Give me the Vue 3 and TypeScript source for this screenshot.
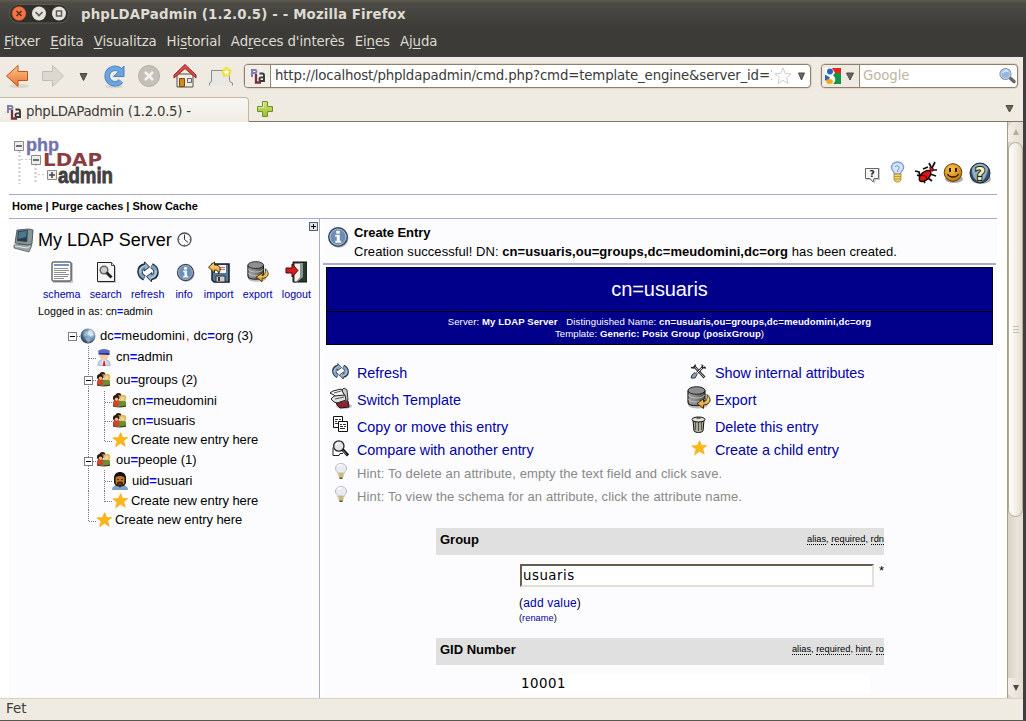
<script setup lang="ts">
interface TreeRow {
  height: number
  depth: number
  icon: string
  parts: string[]
  box?: boolean
  last?: boolean
}

const menus = [
  ['', 'F', 'itxer'],
  ['', 'E', 'dita'],
  ['', 'V', 'isualitza'],
  ['Hi', 's', 'torial'],
  ['Ad', 'r', "eces d'interès"],
  ['Ei', 'n', 'es'],
  ['Aj', 'u', 'da'],
]

const tools = ['schema', 'search', 'refresh', 'info', 'import', 'export', 'logout']

const tree: TreeRow[] = [
  { height: 21, depth: 0, icon: 'globe', parts: ['dc', 'meudomini'], box: true },
  { height: 22, depth: 1, icon: 'admin', parts: ['cn', 'admin'] },
  { height: 23, depth: 1, icon: 'group', parts: ['ou', 'groups (2)'], box: true },
  { height: 20, depth: 2, icon: 'group', parts: ['cn', 'meudomini'] },
  { height: 19, depth: 2, icon: 'group', parts: ['cn', 'usuaris'] },
  { height: 20, depth: 2, icon: 'star', parts: ['Create new entry here'], last: true },
  { height: 20, depth: 1, icon: 'group', parts: ['ou', 'people (1)'], box: true },
  { height: 21, depth: 2, icon: 'person', parts: ['uid', 'usuari'] },
  { height: 19, depth: 2, icon: 'star', parts: ['Create new entry here'], last: true },
  { height: 20, depth: 1, icon: 'star', parts: ['Create new entry here'], last: true },
]

const actions = [
  { icon: 'refresh', label: 'Refresh', h: 26, size: 17 },
  { icon: 'tools', label: 'Show internal attributes', h: 26, size: 17 },
  { icon: 'switch', label: 'Switch Template', h: 28, size: 23 },
  { icon: 'export', label: 'Export', h: 28, size: 24 },
  { icon: 'copy', label: 'Copy or move this entry', h: 25, size: 17 },
  { icon: 'trash', label: 'Delete this entry', h: 25, size: 17 },
  { icon: 'compare', label: 'Compare with another entry', h: 22, size: 17 },
  { icon: 'star', label: 'Create a child entry', h: 22, size: 16 },
]

const hints = [
  'Hint: To delete an attribute, empty the text field and click save.',
  'Hint: To view the schema for an attribute, click the attribute name.',
]
</script>

<template>
  <div class="window">
    <svg class="defs" width="0" height="0" aria-hidden="true">
      <defs>
        <linearGradient id="g-orange" x1="0" y1="0" x2="0" y2="1"><stop offset="0" stop-color="#f9c98c" /><stop offset="1" stop-color="#e9702c" /></linearGradient>
        <linearGradient id="g-grey" x1="0" y1="0" x2="1" y2="0"><stop offset="0" stop-color="#9a9a9a" /><stop offset=".4" stop-color="#8a8a8a" /><stop offset="1" stop-color="#4a4a4a" /></linearGradient>
        <linearGradient id="g-gold" x1="0" y1="0" x2="0" y2="1"><stop offset="0" stop-color="#fbe49a" /><stop offset="1" stop-color="#e0981c" /></linearGradient>
        <linearGradient id="g-green" x1="0" y1="0" x2="0" y2="1"><stop offset="0" stop-color="#d3e27c" /><stop offset="1" stop-color="#9dbf2c" /></linearGradient>
        <radialGradient id="g-globe" cx=".65" cy=".35" r=".75"><stop offset="0" stop-color="#c9dcea" /><stop offset=".5" stop-color="#6a8fb4" /><stop offset="1" stop-color="#1c2c44" /></radialGradient>
        <radialGradient id="g-smile" cx=".4" cy=".3" r=".7"><stop offset="0" stop-color="#f9c44e" /><stop offset="1" stop-color="#c47a08" /></radialGradient>
      </defs>
      <symbol id="i-schema" viewBox="0 0 22 22">
        <rect x="2" y="2" width="20" height="20" fill="#c9c9cc" />
        <rect x="1" y="1" width="19" height="19" rx="1" fill="#fff" stroke="#222" />
        <rect x="3" y="3" width="15" height="2" fill="#6f93bd" />
        <path d="M3 7.500h14M3 9.500h15M3 11.500h12M3 13.500h15M3 15.500h14M3 17.500h10" stroke="#8d8d8d" />
      </symbol>
      <symbol id="i-search" viewBox="0 0 22 22">
        <path d="M3 3h15l3 3v16H3z" fill="#c9c9cc" />
        <path d="M2.500 1.500h14l3 3v16h-17z" fill="#f4f4f2" stroke="#222" />
        <path d="M16.500 1.500v3h3" fill="#ddd" stroke="#444" />
        <circle cx="9" cy="9" r="3.800" fill="#c9d2cc" stroke="#666" stroke-width="1.500" />
        <path d="M11.500 11.500l5 5" stroke="#222" stroke-width="3" />
      </symbol>
      <symbol id="i-refresh" viewBox="0 0 22 22">
        <g id="arrow-half">
          <path d="M7.500 17C1.500 14 1 6.500 8 5" fill="none" stroke="#1e2c3c" stroke-width="5.400" />
          <path d="M7.500.8l5 5.200-5.500 4z" fill="#9db7cd" stroke="#1e2c3c" />
          <path d="M7.300 16.500C2 14 1.500 7 8.500 5.400" fill="none" stroke="#7fa1c2" stroke-width="3.400" />
          <path d="M3 12C2.300 8.500 4.500 5.500 8 4.500" fill="none" stroke="#c6d8e6" stroke-width="1.200" />
        </g>
        <use href="#arrow-half" transform="rotate(180 11 10.800)" />
      </symbol>
      <symbol id="i-info" viewBox="0 0 22 22">
        <circle cx="12" cy="12.200" r="9.500" fill="#b8bbc2" />
        <circle cx="11" cy="11" r="9.300" fill="#6d8db4" stroke="#3b4552" stroke-width="1.400" />
        <circle cx="11" cy="11" r="8" fill="none" stroke="#a6bad2" />
        <path d="M9.500 5h3v2.500h-3zM8.500 9h4v6h1.500v1.500h-5.500V15H10v-4.500H8.500z" fill="#fff" stroke="#fff" stroke-width=".4" />
      </symbol>
      <symbol id="i-import" viewBox="0 0 22 22">
        <path d="M4 3h17v18H6l-2-2z" fill="#56779d" stroke="#161e2a" stroke-width="1.500" />
        <path d="M7 4h11v8H7z" fill="#f5f5f2" /><path d="M8 6.500h9M8 8.500h9" stroke="#d66" />
        <path d="M8 15h9v6H8z" fill="#ccc" stroke="#333" /><path d="M10 16h2v4h-2z" fill="#334" />
        <path d="M.5 6l6-5v3c6 0 7 4 4 9 0-3-1-4-4-4v3z" fill="url(#g-gold)" stroke="#3e2c06" />
      </symbol>
      <symbol id="i-export" viewBox="0 0 24 24">
        <ellipse cx="11" cy="19" rx="10" ry="3.500" fill="#bbb" />
        <path d="M1 5v11c0 5 17 5 17 0V5z" fill="url(#g-grey)" stroke="#1c1c1c" stroke-width="1.200" />
        <path d="M1.500 9c1 4 15 4 16 0M1.500 13c1 4 15 4 16 0" fill="none" stroke="#ccc" stroke-width=".9" />
        <ellipse cx="9.500" cy="4.500" rx="8.500" ry="3.800" fill="#8e8e8e" stroke="#222" />
        <path d="M20 8.500c5 4 4 10-3.500 10.500v3.500L10 17.500l6.500-4.500v3c3-.5 4-3.500 3.500-7.500z" fill="url(#g-gold)" stroke="#3e2c06" />
      </symbol>
      <symbol id="i-logout" viewBox="0 0 22 22">
        <path d="M8 1h14v20H8z" fill="#28382f" stroke="#111" />
        <path d="M9 2h8v15l-6 4H9z" fill="#f1f1ee" stroke="#333" />
        <path d="M15 2h3v14l-6 5h-1l4-5z" fill="#8b918e" />
        <path d="M1 7h6V3l6 6.500L7 16v-4H1z" fill="#d3201c" stroke="#500" />
      </symbol>
      <symbol id="i-globe" viewBox="0 0 16 16">
        <circle cx="8" cy="8" r="7.500" fill="url(#g-globe)" />
        <path d="M9 1.500l3 1.500 2 4-3 1.500-1.500-1-2-1z" fill="#e6eef2" opacity=".75" />
        <path d="M5 3l3 1-1 4-3 1-1-3z" fill="#dbe7ec" opacity=".35" /><path d="M5 10l4 0 2 3-3 2z" fill="#e4edf2" opacity=".4" />
      </symbol>
      <symbol id="i-admin" viewBox="0 0 16 18">
        <path d="M2 18c0-5 2-6.500 6-6.500s6 1.500 6 6.500z" fill="#cfd5e8" stroke="#8a92b4" stroke-width=".7" />
        <path d="M6 12l2 2 2-2-1 6H7z" fill="#fff" /><path d="M7.500 13h1.300l.7 5h-2.700z" fill="#d22" />
        <circle cx="8" cy="7.500" r="4.700" fill="#f4cda6" />
        <path d="M2 3.500C3 0 13 0 14 3.500L13 6H3z" fill="#5b6bc0" /><path d="M2.500 5h11v2l-11-.5z" fill="#27348c" />
      </symbol>
      <symbol id="i-group" viewBox="0 0 16 16">
        <circle cx="6.500" cy="4" r="3" fill="#2c1d12" /><circle cx="7" cy="5" r="2" fill="#b98052" />
        <path d="M1 14v-3.500c0-3 7-3.500 8 0V14z" fill="#d64325" />
        <circle cx="4" cy="6" r="3" fill="#201812" /><circle cx="4.500" cy="7.300" r="1.800" fill="#eab582" />
        <path d="M7 14.500v-4c1-3 7-3 7 0v4c-2 .8-5 .8-7 0z" fill="#6b8f2b" />
        <circle cx="11" cy="6" r="3.300" fill="#d9bf58" /><circle cx="10.500" cy="6.800" r="2" fill="#f1d0a4" />
        <path d="M1 14c3 1 9 1.500 13 0" stroke="#35261c" fill="none" />
      </symbol>
      <symbol id="i-person" viewBox="0 0 16 18">
        <path d="M0 18c0-4 3-5 8-5s8 1 8 5z" fill="#7fa0c4" />
        <path d="M2 6c0-8 12-8 12 0v5l-2 3H4l-2-3z" fill="#17120e" />
        <path d="M3.500 5.500c2-2 7-2 9 0V11c-2 4-7 4-9 0z" fill="#bf742e" />
        <path d="M5 10.500c2-1.500 4-1.500 6 0v3l-3 2-3-2z" fill="#3a210e" /><path d="M6.500 12h3" stroke="#a05a30" />
        <path d="M5 7.500h2M9 7.500h2" stroke="#5a3412" />
      </symbol>
      <symbol id="i-star" viewBox="0 0 16 16">
        <path d="M8.700.7l1.900 4.700 5 .2-3.900 3.200 1.500 5.400-4.700-2.900-4.900 3.500 1.500-5.600L.8 5.900l5.600-.3z" fill="#fdb813" stroke="#f5a61d" stroke-width=".7" />
      </symbol>
      <symbol id="i-tools" viewBox="0 0 17 17">
        <path d="M4 3l4.500 5 6 6.500" stroke="#222" stroke-width="2.600" fill="none" /><path d="M4 3l4.500 5 6 6.500" stroke="#c8c8c8" fill="none" />
        <path d="M14 3L7 10" stroke="#222" stroke-width="2.400" /><path d="M14 3L7 10" stroke="#eee" />
        <path d="M1 15l1-3 3-2.500 2 2L5 15z" fill="#8ba6c4" stroke="#222" stroke-width=".9" />
        <path d="M12 1.500l.5 3 3.500.5M1 4.500l3 .5 1.500-3.500" stroke="#222" stroke-width="1.300" fill="none" />
      </symbol>
      <symbol id="i-switch" viewBox="0 0 23 23">
        <ellipse cx="15" cy="19" rx="8" ry="3" fill="#c4c4c4" />
        <path d="M7 15l10-4 2 3 1 6-9 1-3-3z" fill="#8e2430" stroke="#201010" />
        <path d="M13 3l2-2 3 2 1 10-3 2z" fill="#c9cdc8" stroke="#333" />
        <path d="M1 6l3-2 8-2 4 7-8 2-3-3z" fill="#f2f2ee" stroke="#222" />
        <path d="M2 12l3-3 11-1 1 5-9 3-3-1z" fill="#dfe2dc" stroke="#222" />
        <path d="M5 6l7-2M6 12l9-2M14 15l3-1" stroke="#555" />
      </symbol>
      <symbol id="i-copy" viewBox="0 0 17 17">
        <path d="M1.500.5h9v11h-9z" fill="#fff" stroke="#111" /><path d="M3 3.500h3M7 3.500h2M3 5.500h2M3 7.500h3" stroke="#333" />
        <path d="M6.500 5.500h9v10h-9z" fill="#fff" stroke="#111" /><path d="M8 8.500h2M11 8.500h3M8 10.500h3M12 10.500h2M8 12.500h5" stroke="#333" />
      </symbol>
      <symbol id="i-trash" viewBox="0 0 17 17">
        <path d="M3 4h11l-1 11c-2 2-7 2-9 0z" fill="#b9b9a8" stroke="#111" />
        <path d="M5.500 6v8M8.500 6v9M11.500 6v8" stroke="#55554a" stroke-width="1.300" />
        <ellipse cx="8.500" cy="3.500" rx="6.500" ry="2.500" fill="#e2e2d6" stroke="#111" /><path d="M6.500 2h4" stroke="#444" stroke-width="1.500" />
      </symbol>
      <symbol id="i-compare" viewBox="0 0 17 17">
        <path d="M1 7.500v8h6l1-2h3" fill="#fff" stroke="#222" />
        <circle cx="6.800" cy="6" r="5.200" fill="#dfe5e6" stroke="#222" stroke-width="1.300" />
        <path d="M4 5c1-2 3-2 4-1" stroke="#fff" stroke-width="1.500" fill="none" />
        <path d="M10.500 9.500l5.500 6" stroke="#111" stroke-width="3" /><path d="M11 10.500l3.500 4" stroke="#888" />
      </symbol>
      <symbol id="i-hint" viewBox="0 0 14 17">
        <path d="M7 .5c-4 0-6 3-5.500 5.500.3 2 2.500 3 2.500 5h6c0-2 2.200-3 2.500-5C13 3.500 11 .5 7 .5z" fill="#eaeaf4" stroke="#bcbcc4" />
        <path d="M4 3.500C5 2 7 2 8 2.500" stroke="#fff" stroke-width="1.500" fill="none" />
        <path d="M4.500 9.500h5v4l-1 2h-3l-1-2z" fill="#cdb97a" /><path d="M5.500 14.500h3V16h-3z" fill="#555" />
      </symbol>
      <symbol id="i-pla" viewBox="0 0 16 16">
        <path d="M2 9V2h3.500q1 0 1 1.500t-1 1.500H2" fill="none" stroke="#8080b0" stroke-width="2" />
        <path d="M6 6v8.500h5" fill="none" stroke="#7c3038" stroke-width="2.300" />
        <path d="M9.500 5.500h3q1.500 0 1.500 1.500v6h-3q-1.500 0-1.500-1.800T11 9.400h2" fill="none" stroke="#383838" stroke-width="1.900" />
      </symbol>
    </svg>

    <header class="titlebar">
      <svg class="winbtns" width="60" height="20" viewBox="0 0 60 20">
        <rect x=".5" y=".5" width="59" height="18.500" rx="9" fill="#302f2b" stroke="#5c5a52" />
        <circle cx="10" cy="9.500" r="7" fill="#ee7546" stroke="#b5411e" stroke-width=".6" />
        <path d="M7.500 7l5 5m0-5l-5 5" stroke="#5c2a18" stroke-width="1.500" />
        <circle cx="30" cy="9.500" r="7" fill="#e6e2da" /><path d="M26.500 8l3.500 3.500L33.500 8" fill="none" stroke="#5c5a54" stroke-width="1.600" />
        <circle cx="50" cy="9.500" r="7" fill="#e6e2da" /><rect x="47.500" y="7" width="5" height="5" fill="none" stroke="#5c5a54" stroke-width="1.500" />
      </svg>
      <span class="wintitle">phpLDAPadmin (1.2.0.5) - - Mozilla Firefox</span>
    </header>
    <nav class="menubar">
      <span v-for="(m, i) in menus" :key="i">{{ m[0] }}<u>{{ m[1] }}</u>{{ m[2] }}</span>
    </nav>

    <div class="frame">
      <div class="toolbar">
        <svg class="navicons" width="244" height="41" viewBox="0 0 244 41">
          <ellipse cx="19" cy="30" rx="10" ry="2" fill="#ddd6ca" />
          <path d="M6.500 20L18 9.500v6h9.500v9H18v6z" fill="url(#g-orange)" stroke="#c8501c" />
          <path d="M63.500 20L52.500 9.500v6h-10v9h10v6z" fill="#dcd8d1" stroke="#c3beb5" />
          <path d="M80 17.500h7l-3.500 7z" fill="#625c52" stroke="#4f4a42" />
          <ellipse cx="114" cy="30.500" rx="9" ry="1.800" fill="#dad3c8" />
          <path d="M120.500 14.500a7.800 7.800 0 1 0 .5 10.500" fill="none" stroke="#4a82c0" stroke-width="5.600" />
          <path d="M113.500 20.500h10.500V10z" fill="#6ca4de" stroke="#4a82c0" />
          <path d="M120.500 14.500a7.800 7.800 0 1 0 .5 10.500" fill="none" stroke="#6ca4de" stroke-width="4" />
          <circle cx="149" cy="20" r="10.500" fill="#c4c0b8" stroke="#b5b0a8" /><path d="M145 16l8 8m0-8l-8 8" stroke="#f4f2ee" stroke-width="2.500" />
          <path d="M177 18h16v13h-16z" fill="#efece4" stroke="#55504c" />
          <path d="M174 19l11-10.500L196 19v3l-11-9.500-11 9.500z" fill="#dc4b4b" stroke="#9c1c1c" />
          <path d="M179.500 22.500h5v8h-5z" fill="#d28a1c" stroke="#7a4a08" /><path d="M187.500 22.500h4v4h-4z" fill="#dce8f4" stroke="#666" />
          <path d="M209.500 29.500V27q2-.5 2-3v-9.500h18V24q0 2.500 3 3v2.500" fill="#e9e7e3" stroke="#8f8b85" />
          <circle cx="226.500" cy="16" r="5" fill="#f5e84c" opacity=".85" />
          <path d="M226.500 11.500l1.300 3 3.200.3-2.400 2.200.7 3.200-2.800-1.700-2.800 1.700.7-3.200-2.400-2.200 3.200-.3z" fill="#fffde0" stroke="#e2cc18" stroke-width=".8" />
        </svg>
        <div class="urlbar">
          <span class="site"><svg width="16" height="16"><use href="#i-pla" /></svg></span>
          <span class="url">http://localhost/phpldapadmin/cmd.php?cmd=template_engine&amp;server_id=1</span>
          <svg class="urlend" width="38" height="20" viewBox="0 0 38 20">
            <path d="M11 2l2.300 5.400 5.700.5-4.300 3.800 1.300 5.700-5-3-5 3 1.300-5.700L3 7.900l5.700-.5z" fill="#fdfdfd" stroke="#cfccc6" />
            <path d="M26.500 7h6l-3 7z" fill="#6a655b" stroke="#504b42" />
          </svg>
        </div>
        <div class="searchbar">
          <span class="engine">
            <svg width="34" height="20" viewBox="0 0 34 20">
              <rect x="1" y="2" width="16" height="16" fill="#fff" />
              <path d="M8 2h9v5h-6z" fill="#f0201c" /><path d="M11 7h6v11H9c3-3 3-6 0-9z" fill="#149444" /><path d="M1 8.500l5 3-2 3H1z" fill="#2a63c4" />
              <circle cx="6" cy="5.500" r="3" fill="#2a63c4" />
              <ellipse cx="5.500" cy="15.500" rx="3.500" ry="2.500" fill="#f5a81c" />
              <path d="M22.500 7h7l-3.500 7z" fill="#6a655b" stroke="#504b42" />
            </svg>
          </span>
          <span class="placeholder">Google</span>
          <svg width="18" height="18" viewBox="0 0 18 18">
            <path d="M10.500 10.500l4.500 4" stroke="#666" stroke-width="3.500" stroke-linecap="round" />
            <circle cx="6.500" cy="7" r="5.500" fill="#8fb6e4" stroke="#8a8f98" stroke-width="1.200" /><circle cx="6.500" cy="7" r="4.500" fill="none" stroke="#c8dcf4" />
            <path d="M4 6c1-2.500 4-2.500 5-1.500" stroke="#dceaf8" fill="none" stroke-width="1.500" />
          </svg>
        </div>
      </div>

      <div class="tabs">
        <div class="tab"><svg width="16" height="16"><use href="#i-pla" /></svg><span>phpLDAPadmin (1.2.0.5) -</span></div>
        <div class="tabrest">
          <svg width="16" height="16" viewBox="0 0 16 16"><path d="M5.500.5h5v5h5v5h-5v5h-5v-5h-5v-5h5z" fill="url(#g-green)" stroke="#6b9428" /><path d="M6.500 1.500v5h-5" fill="none" stroke="#e4eeb0" /></svg>
          <svg width="9" height="8" viewBox="0 0 9 8"><path d="M1 .5h7L4.500 7z" fill="#6a655b" stroke="#504b42" /></svg>
        </div>
      </div>

      <div class="viewport">
        <div class="page">
          <div class="masthead">
            <svg class="logo" width="102" height="50" viewBox="0 0 102 50">
              <path d="M5.500 15v33M21.500 28v20" stroke="#c9c9c9" stroke-width="2" stroke-dasharray="2 2" />
              <path d="M7 23.500h10M24 38.500h8" stroke="#c9c9c9" stroke-dasharray="2 2" />
              <g fill="#eee" stroke="#8a8a8a"><path d="M.5 5.500h9v9h-9zM17.500 19.500h9v9h-9zM33.500 34.500h9v9h-9z" /></g>
              <path d="M2 10h6M19 24h6M35 39h6M38 36v6" stroke="#444" stroke-width="1.500" />
              <text class="logo-php" x="12" y="15" textLength="33" lengthAdjust="spacingAndGlyphs">php</text>
              <text class="logo-ldap" x="29" y="29.500" textLength="59" lengthAdjust="spacingAndGlyphs">LDAP</text>
              <text class="logo-admin" x="44" y="46.500" textLength="55" lengthAdjust="spacingAndGlyphs">admin</text>
            </svg>
            <svg class="topicons" width="130" height="26" viewBox="0 0 130 26">
              <path d="M2 7h14v12h-4l-1 4-3-4H2z" fill="#aaa" opacity=".6" />
              <path d="M1.500 7.500h13v10H10L9 21l-3-3.500H1.500z" fill="#f6f6f6" stroke="#666" />
              <text class="q-small" x="5.500" y="16">?</text>
              <path d="M33.500 1c-4 0-6.500 3-6 6 .3 2.500 3 3.500 3 6h6c0-2.500 2.700-3.500 3-6 .5-3-2-6-6-6z" fill="#d5e4f8" stroke="#7d9fd8" stroke-width="1.400" />
              <path d="M31 6c1-2 4-1.500 4 .5S33 9 33.500 11" stroke="#6f92cc" fill="none" />
              <path d="M30 13h7v6l-2 2h-3l-2-2z" fill="#f0d468" stroke="#a98222" stroke-width=".8" /><path d="M30 15.500h7M30 18h7" stroke="#a98222" stroke-width=".7" />
              <path d="M51 10l4 1 1 5M55 19l4 0 2 3M59 8l5-2M65 2l2 4M71 1l-3 6M73 9h-6M72 15l-6-2M68 20l-4-3M53 14l5 2" fill="none" stroke="#111" stroke-width="1.700" />
              <ellipse cx="61" cy="15" rx="7" ry="4" transform="rotate(-42 61 15)" fill="#d6141c" stroke="#190000" stroke-width="1.400" /><path d="M57 14l5 1 1 4" fill="none" stroke="#500" /><path d="M66 6l3 1 0 3-3 0z" fill="#f0141c" stroke="#400" />
              <ellipse cx="90" cy="18" rx="9" ry="4" fill="#aaa" /><circle cx="89" cy="11.500" r="8.800" fill="url(#g-smile)" stroke="#5e3b08" />
              <path d="M86 7v4M92 7v4" stroke="#221604" stroke-width="1.900" /><path d="M83.500 13c2 4 9 4 11 0" fill="none" stroke="#221604" stroke-width="1.300" />
              <ellipse cx="117" cy="18" rx="10" ry="5" fill="#aaa" /><circle cx="116" cy="12" r="10" fill="#37536c" stroke="#1a2530" /><path d="M108 9c1-7 12-9 16-1-1 6-4 12-8 13-5-1-8-6-8-12z" fill="#8eafc8" />
              <text class="q-big" x="111" y="19">?</text>
            </svg>
          </div>
          <div class="crumbs"><b>Home</b> | <b>Purge caches</b> | <b>Show Cache</b></div>
          <div class="columns">
            <aside class="sidebar">
              <svg class="expand" width="9" height="9" viewBox="0 0 9 9"><rect x=".5" y=".5" width="8" height="8" fill="#dce6ee" stroke="#56606a" /><path d="M2 4.500h5M4.500 2v5" stroke="#000" /></svg>
              <div class="server">
                <svg width="22" height="24" viewBox="0 0 22 24">
                  <path d="M1 17l13-1 5 1-3 7L1 20z" fill="#9aa4a4" stroke="#596262" stroke-width=".8" />
                  <path d="M2 18l12 2 3-2" stroke="#e4ecec" fill="none" />
                  <path d="M4 2l12-1 4 1-1 14-4 1-13-2z" fill="#8a9696" stroke="#3c4444" stroke-width=".8" />
                  <path d="M5 3l10-1-1 12-10-1z" fill="#263c52" /><path d="M6 4l8-1-1 6-8 2z" fill="#4d7690" />
                </svg>
                <span>My LDAP Server</span>
                <svg class="clock" width="15" height="15" viewBox="0 0 15 15"><circle cx="7.500" cy="7.500" r="6.500" fill="#fafafa" stroke="#4c4c4c" stroke-width="1.300" /><path d="M7.500 3v4.500L11 10.500" fill="none" stroke="#333" /><path d="M7.500 2v1M7.500 12v1M2 7.500h1M12 7.500h1" stroke="#aaa" /></svg>
              </div>
              <div class="tools">
                <a v-for="t in tools" :key="t" :class="t"><svg width="22" height="22"><use :href="'#i-' + t" /></svg><span>{{ t }}</span></a>
              </div>
              <div class="logged">Logged in as: cn<i>=</i>admin</div>
              <div class="tree">
                <div v-for="(r, i) in tree" :key="i" class="row" :class="{ root: r.depth === 0, even: r.height % 2 === 0 }" :style="{ height: r.height + 'px' }">
                  <svg v-if="r.depth === 2" width="16" :height="r.height"><line x1="8.500" y1="0" x2="8.500" :y2="r.height" class="dots" /></svg>
                  <svg width="16" :height="r.height">
                    <line v-if="r.depth" x1="8.500" y1="0" x2="8.500" :y2="r.last ? Math.floor(r.height / 2) + 2 : r.height" class="dots" />
                    <line x1="9" :y1="Math.floor(r.height / 2) + 1.500" x2="16" :y2="Math.floor(r.height / 2) + 1.500" class="dots" />
                    <g v-if="r.box" :transform="`translate(4 ${Math.floor(r.height / 2) - 3})`"><rect x=".5" y=".5" width="8" height="8" fill="#fff" stroke="#808080" /><path d="M2 4.500h5" stroke="#000" /></g>
                  </svg>
                  <svg width="16" :height="r.icon === 'admin' || r.icon === 'person' ? 18 : 16" :class="r.icon"><use :href="'#i-' + r.icon" /></svg>
                  <span v-if="r.parts.length === 1" class="create">{{ r.parts[0] }}</span>
                  <span v-else class="label">{{ r.parts[0] }}<i>=</i>{{ r.parts[1] }}<template v-if="!r.depth"><em>,</em>dc<i>=</i>org (3)</template></span>
                </div>
              </div>
            </aside>

            <main class="main">
              <section class="notice">
                <svg width="22" height="22"><use href="#i-info" /></svg>
                <div><h2>Create Entry</h2><p>Creation successful! DN: <b>cn=usuaris,ou=groups,dc=meudomini,dc=org</b> has been created.</p></div>
              </section>
              <section class="banner">
                <h1>cn=usuaris</h1>
                <div class="meta">
                  <p>Server: <b>My LDAP Server</b> <span>Distinguished Name: <b>cn=usuaris,ou=groups,dc=meudomini,dc=org</b></span></p>
                  <p>Template: <b>Generic: Posix Group</b> (<b>posixGroup</b>)</p>
                </div>
              </section>
              <section class="actions">
                <div v-for="a in actions" :key="a.label" class="action" :style="{ height: a.h + 'px' }">
                  <span class="ico"><svg :width="a.size" :height="a.size"><use :href="'#i-' + a.icon" /></svg></span><a>{{ a.label }}</a>
                </div>
              </section>
              <div v-for="h in hints" :key="h" class="hint"><span class="ico"><svg width="14" height="17"><use href="#i-hint" /></svg></span><span>{{ h }}</span></div>
              <section class="form">
                <div class="bar"><b>Group</b><small><u>alias</u>, <u>required</u>, <u>rdn</u></small></div>
                <div class="field"><div class="input">usuaris</div><sup>*</sup></div>
                <div class="sub">(<a>add value</a>)</div>
                <div class="sub tiny">(<a>rename</a>)</div>
                <div class="bar second"><b>GID Number</b><small><u>alias</u>, <u>required</u>, <u>hint</u>, <u>ro</u></small></div>
                <div class="readonly">10001</div>
              </section>
            </main>
          </div>
        </div>
        <div class="scrollbar">
          <div class="sbtn up"><svg width="6" height="6" viewBox="0 0 6 6"><path d="M3 0l3 6H0z" fill="#b5aa98" /></svg></div>
          <div class="thumb"><i></i><i></i><i></i></div>
          <div class="track"></div>
          <div class="sbtn down"><svg width="6" height="6" viewBox="0 0 6 6"><path d="M0 0h6L3 6z" fill="#4c473f" /></svg></div>
        </div>
      </div>
      <footer class="status">Fet</footer>
    </div>
  </div>
</template>

<style>
html, body { margin: 0; overflow: hidden; }
</style>

<style scoped>
.window { width: 1026px; height: 721px; display: flex; flex-direction: column; overflow: hidden; background: #3c3b37; font-family: "DejaVu Sans", sans-serif; font-size: 13.33px; color: #3c3b37; }
.window * { box-sizing: border-box; }
.window svg { display: block; flex: none; overflow: visible; }
.defs { position: absolute; }
.window h1, .window h2, .window p { margin: 0; }
.titlebar { height: 28px; flex: none; display: flex; align-items: center; background: linear-gradient(#6a6152 0, #55534a 1px, #4b4a45 4px, #3c3b37 28px); }
.winbtns { margin: 0 0 0 9px; }
.wintitle { margin-left: 12px; font-weight: bold; color: #dfdbd2; white-space: nowrap; letter-spacing: .14px; }
.menubar { height: 28px; flex: none; display: flex; align-items: center; gap: 10px; padding: 0 0 2px 4px; color: #dfdbd2; white-space: nowrap; letter-spacing: -.1px; }
.menubar u { text-decoration: underline; text-underline-offset: 2px; text-decoration-thickness: 1px; text-decoration-skip-ink: none; }
.frame { height: 665px; flex: none; display: flex; flex-direction: column; background: #efebe3; border-right: 3px solid #443c44; border-bottom: 1px solid #5c574e; border-top: 1px solid #443c44; }
.toolbar { height: 41px; flex: none; display: flex; align-items: flex-start; margin-top: -1px; }
.urlbar, .searchbar { height: 24px; margin-top: 8px; border: 1px solid #8f7f6c; border-radius: 4px; background: #fff; display: flex; align-items: center; overflow: hidden; box-shadow: 0 0 0 .5px #cfc4b2; }
.urlbar { width: 567px; }
.site { width: 26px; flex: none; height: 22px; display: flex; align-items: center; justify-content: center; border-right: 1px solid #948772; background: #f1eee8; }
.url { width: 501px; flex: none; padding-left: 4px; white-space: nowrap; overflow: hidden; line-height: 22px; letter-spacing: -.16px; }
.searchbar { width: 197px; margin-left: 10px; }
.engine { width: 38px; height: 22px; display: flex; align-items: center; padding-left: 2px; border-right: 1px solid #948772; background: #efebe3; }
.placeholder { flex: 1; padding-left: 3px; color: #c1b69f; line-height: 22px; letter-spacing: -.1px; }
.tabs { height: 25px; flex: none; display: flex; }
.tab { width: 249px; height: 25px; display: flex; align-items: center; padding: 3px 0 0 6px; border: 1px solid #c6b89f; border-width: 1px 1px 0 0; border-radius: 0 4px 0 0; background: linear-gradient(#f9f7f3, #f0ece3); white-space: nowrap; }
.tab span { margin-left: 4px; letter-spacing: -.28px; }
.tabrest { flex: 1; display: flex; align-items: center; justify-content: space-between; padding: 0 9px 0 8px; border-bottom: 1px solid #857765; }
.viewport { height: 576px; flex: none; display: flex; background: #fff; overflow: hidden; }
.page { width: 1007px; height: 576px; padding-left: 9px; font-family: "Liberation Sans", Arial, sans-serif; color: #000; font-size: 13px; }
.masthead { height: 73px; width: 988px; border-bottom: 1px solid #aaaacc; display: flex; justify-content: space-between; }
.logo { margin: 14px 0 0 5px; }
.logo-php { font: bold 19px "Liberation Sans", sans-serif; fill: #7474ac; stroke: #7474ac; stroke-width: .4; }
.logo-ldap { font: bold 18.500px "DejaVu Sans", sans-serif; fill: #8a3c42; }
.logo-admin { font: bold 22px "Liberation Sans", sans-serif; fill: #404040; stroke: #404040; stroke-width: .8; }
.topicons { margin: 39px 3px 0 0; }
.q-small { font: bold 9px "DejaVu Sans", sans-serif; fill: #222; }
.q-big { font: bold 18px "DejaVu Sans", sans-serif; fill: #fbf0b0; stroke: #222; stroke-width: 2px; paint-order: stroke; }
.crumbs { width: 988px; height: 24px; padding-left: 3px; line-height: 23px; font-size: 11px; font-weight: bold; border-bottom: 1px solid #aaaacc; }
.columns { display: flex; height: 479px; }
.sidebar { position: relative; width: 311px; background: #fcfcfe; border-right: 1px solid #aaaacc; }
.expand { position: absolute; right: 1px; top: 3px; }
.server { display: flex; align-items: center; height: 42px; padding-left: 4px; font-size: 18px; }
.server span { margin: 0 5px 0 3px; white-space: nowrap; }
.clock { margin-bottom: 2px; }
.tools { height: 43px; display: flex; justify-content: space-between; padding: 0 8px 0 34px; font-size: 10.700px; color: #0000aa; }
.tools a { display: flex; flex-direction: column; align-items: center; }
.tools span { line-height: 14px; margin-top: 4px; }
.tools .info svg { width: 19px; height: 19px; margin: 2px 0 1px 2px; }
.logged { padding-left: 29px; height: 21px; line-height: 15px; font-size: 10.700px; letter-spacing: .04px; }
.sidebar i { font-style: normal; color: #0000ff; font-weight: bold; }
.sidebar em { font-style: normal; color: #f00; margin: 0 4px 0 1px; }
.tree { padding-left: 71px; }
.row { display: flex; align-items: center; white-space: nowrap; line-height: 15px; }
.row.root { margin-left: -16px; }
.row .group { margin-bottom: 2px; }
.label { margin-left: 4px; }
.create { margin-left: 3px; letter-spacing: -.07px; }
.even .label, .even .create { margin-bottom: 1px; }
.dots { stroke: #777; stroke-width: 1; stroke-dasharray: 1 1; }
.main { width: 677px; padding-left: 2px; background: linear-gradient(#fcfcfe, #fcfcfe) 2px 0 no-repeat; }
.notice { height: 46px; display: flex; margin-left: 1px; padding: 5px 0 0 4px; border-bottom: 2px solid #aaaacc; width: 673px; }
.notice svg { margin-top: 2px; }
.notice h2 { font-size: 13px; line-height: 17px; letter-spacing: -.08px; }
.notice p { line-height: 19px; margin-top: 1px; white-space: nowrap; letter-spacing: .066px; }
.notice div { margin-left: 5px; }
.banner { margin: 2px 0 0 4px; width: 667px; height: 78px; border: 1px solid #000; background: #00008b; color: #fff; text-align: center; }
.banner h1 { height: 44px; line-height: 43px; font-size: 20px; font-weight: normal; border-bottom: 1px solid #000; letter-spacing: -.1px; }
.meta { padding-top: 4px; font-size: 9.600px; line-height: 12px; letter-spacing: .08px; }
.meta span { margin-left: 6px; }
.actions { margin: 15px 0 1px 6px; display: grid; grid-template-columns: 358px 1fr; font-size: 14.400px; color: #0000aa; letter-spacing: -.04px; }
.action, .hint { display: flex; align-items: center; white-space: nowrap; }
.ico { width: 25px; margin-right: 4px; padding-bottom: 4px; display: flex; justify-content: center; }
.hint { margin-left: 6px; height: 23px; color: #888; letter-spacing: .13px; }
.form { margin: 20px 0 0 114px; width: 448px; }
.bar { height: 27px; padding: 3px 0 0 4px; background: #e0e0e0; display: flex; justify-content: space-between; line-height: 17px; }
.bar small { font-size: 9.300px; line-height: 16px; white-space: nowrap; }
.bar u { text-decoration: none; border-bottom: 1px dotted #000; }
.field { margin: 9px 0 0 84px; display: flex; height: 23px; }
.input { width: 354px; height: 23px; border: 2px solid; border-color: #665c50 #e6dfd8 #e6dfd8 #665c50; background: #fff; font: 13.33px/19px "DejaVu Sans", sans-serif; padding-left: 1px; letter-spacing: .5px; }
.field sup { font-size: 13px; line-height: 14px; margin-left: 5px; vertical-align: baseline; }
.sub { margin-left: 83px; font-size: 12px; line-height: 16px; margin-top: 8px; letter-spacing: .18px; }
.sub a { color: #0000aa; }
.sub.tiny { margin-top: 0; font-size: 9.300px; line-height: 14px; letter-spacing: 0; }
.second { margin-top: 13px; }
.readonly { margin: 9px 0 0 84px; width: 350px; height: 19px; padding-left: 1px; background: #fff; font: 13.33px/19px "DejaVu Sans", sans-serif; letter-spacing: .5px; }
.scrollbar { width: 16px; height: 576px; display: flex; flex-direction: column; border-left: 1px solid #a99b84; background: linear-gradient(90deg, #d9d1c3, #e9e3da 60%, #e2dbcf); }
.sbtn { height: 20px; flex: none; display: flex; align-items: center; justify-content: center; background: linear-gradient(90deg, #f2eee8, #e4ddd2); }
.sbtn.up { border-radius: 7px 7px 0 0; }
.sbtn.down { border-radius: 0 0 7px 7px; }
.thumb { height: 375px; flex: none; border: 1px solid #b5a890; border-radius: 8px; background: linear-gradient(90deg, #fff, #f7f4ef 40%, #e3dccf); display: flex; flex-direction: column; align-items: center; justify-content: center; gap: 2px; }
.thumb i { width: 6px; height: 1px; background: #cabfaa; }
.track { flex: 1; }
.status { flex: 1; padding-left: 6px; line-height: 20px; border-top: 1px solid #ddd0bd; }
</style>
